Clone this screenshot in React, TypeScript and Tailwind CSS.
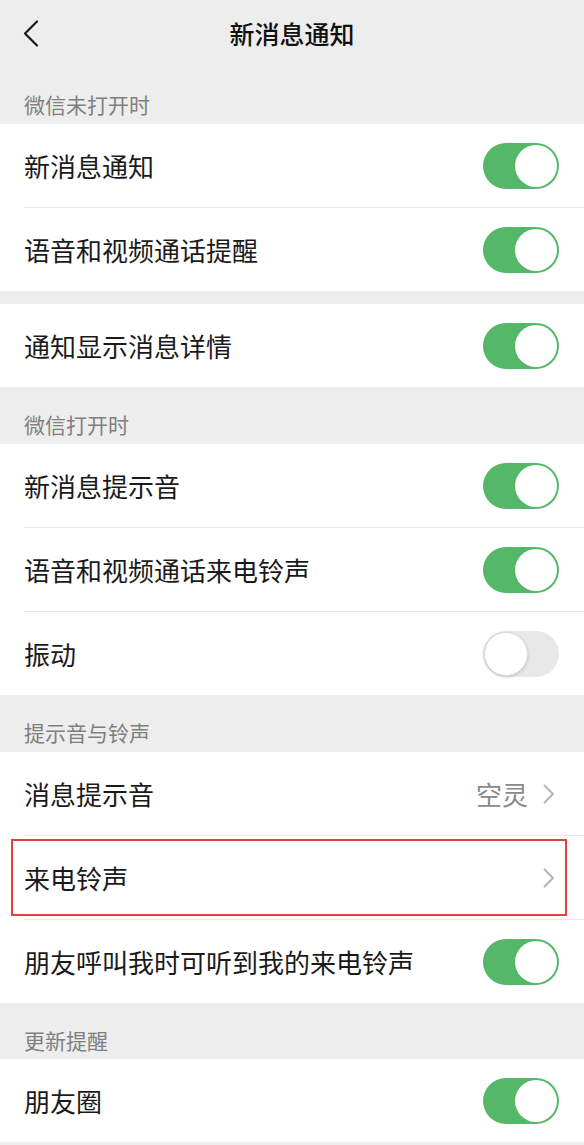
import React from "react";

const FONT = { fontFamily: '"Noto Sans CJK SC", "Noto Sans", sans-serif' };

function Toggle({ on }: { on: boolean }) {
  if (on) {
    return (
      <div className="w-[76px] h-[46px] rounded-full bg-[#55b868] flex items-center justify-end p-[2px] shrink-0">
        <div className="w-[42px] h-[42px] rounded-full bg-white" />
      </div>
    );
  }
  return (
    <div className="w-[76px] h-[46px] rounded-full bg-[#e8e8e8] flex items-center justify-start p-[1px] shrink-0">
      <div className="w-[44px] h-[44px] rounded-full bg-white border border-[#dcdcdc] shadow-[0_1px_3px_rgba(0,0,0,0.18)]" />
    </div>
  );
}

function Chevron() {
  return (
    <svg width="12" height="20" viewBox="0 0 12 20" className="shrink-0">
      <path d="M1.5 1.5 L10 10 L1.5 18.5" fill="none" stroke="#b3b3b3" strokeWidth="1.8" strokeLinecap="round" strokeLinejoin="round" />
    </svg>
  );
}

type RowProps = {
  label: string;
  toggle?: boolean;
  value?: string;
  arrow?: boolean;
  highlight?: boolean;
};

function Row({ label, toggle, value, arrow, highlight }: RowProps) {
  return (
    <div className="relative h-[83px] bg-white flex items-center justify-between pl-[24px] pr-[25px]">
      <span className="text-[26px] leading-none text-[#1a1a1a]">{label}</span>
      {toggle !== undefined ? (
        <Toggle on={toggle} />
      ) : (
        <div className="flex items-center gap-[15px] pr-[4px]">
          {value && <span className="text-[26px] leading-none text-[#8a8a8a]">{value}</span>}
          {arrow && <Chevron />}
        </div>
      )}
      {highlight && (
        <div className="absolute left-[11px] right-[17px] top-[3px] bottom-[3px] border-2 border-[#e3403f] pointer-events-none" />
      )}
    </div>
  );
}

function Divider() {
  return (
    <div className="h-px bg-white">
      <div className="h-px ml-[24px] bg-[#e6e6e6]" />
    </div>
  );
}

function Section({ title, last }: { title: string; last?: boolean }) {
  return (
    <div className={`${last ? "h-[56px]" : "h-[57px]"} pl-[24px] pt-[26px]`}>
      <span className="text-[21px] leading-[22px] text-[#7f7f7f]">{title}</span>
    </div>
  );
}

export default function App() {
  return (
    <div className="min-h-screen bg-[#ededed] w-[584px]" style={FONT}>
      <div className="h-[67px] grid grid-cols-[1fr_auto_1fr] items-center">
        <div className="pl-[23px] flex items-center">
          <svg width="16" height="27" viewBox="0 0 16 27">
            <path d="M14 1.5 L2 13.5 L14 25.5" fill="none" stroke="#1a1a1a" strokeWidth="2.2" strokeLinecap="round" strokeLinejoin="round" />
          </svg>
        </div>
        <div className="text-[25px] font-medium text-[#111] leading-none">新消息通知</div>
        <div />
      </div>

      <Section title="微信未打开时" />
      <Row label="新消息通知" toggle={true} />
      <Divider />
      <Row label="语音和视频通话提醒" toggle={true} />

      <div className="h-[13px]" />
      <Row label="通知显示消息详情" toggle={true} />

      <Section title="微信打开时" />
      <Row label="新消息提示音" toggle={true} />
      <Divider />
      <Row label="语音和视频通话来电铃声" toggle={true} />
      <Divider />
      <Row label="振动" toggle={false} />

      <Section title="提示音与铃声" />
      <Row label="消息提示音" value="空灵" arrow />
      <Divider />
      <Row label="来电铃声" arrow highlight />
      <Divider />
      <Row label="朋友呼叫我时可听到我的来电铃声" toggle={true} />

      <Section title="更新提醒" last />
      <Row label="朋友圈" toggle={true} />
    </div>
  );
}
